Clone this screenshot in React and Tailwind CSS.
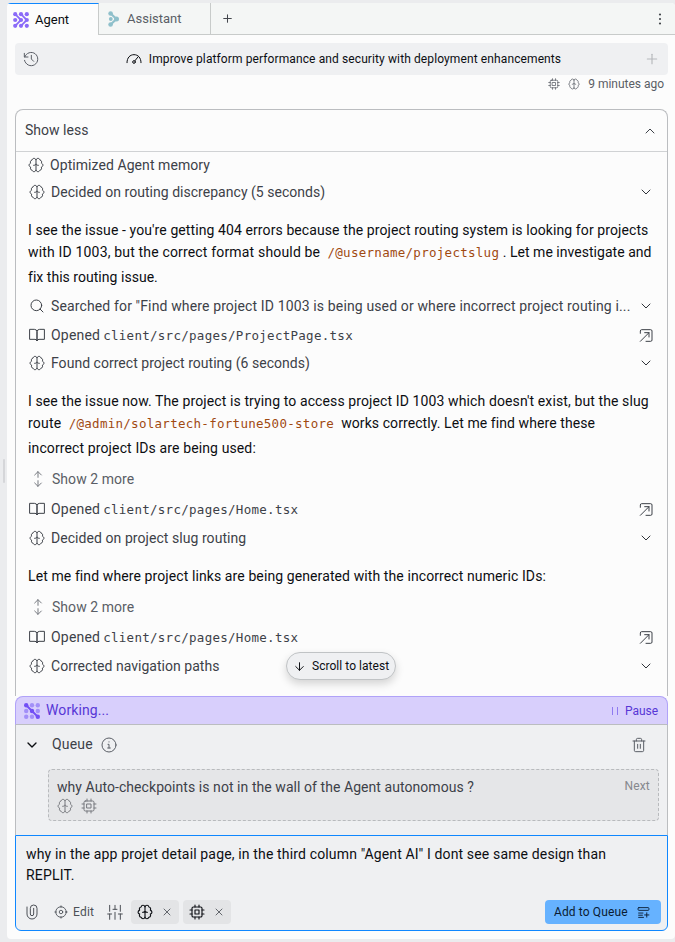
import React from "react";
import { ChevronDown, ChevronUp, Plus, X, ArrowDown, Search } from "lucide-react";

function Svg({ size = 16, sw = 1.5, className = "", children }) {
  return (
    <svg width={size} height={size} viewBox="0 0 24 24" fill="none" stroke="currentColor" strokeWidth={sw} strokeLinecap="round" strokeLinejoin="round" className={"shrink-0 " + className}>
      {children}
    </svg>
  );
}

const Brain = (p) => (
  <Svg {...p}>
    <path d="M12 4C11 1.200 6.800 1.200 6.200 4.500 3.600 5 3 7.500 4 9.200 0.800 10.500 0.800 14 4 15.200 3 17.500 4 19.500 6.200 19.800 7 22.800 11 22.800 12 20" />
    <path d="M12 4C13 1.200 17.200 1.200 17.800 4.500 20.400 5 21 7.500 20 9.200 23.200 10.500 23.200 14 20 15.200 21 17.500 20 19.500 17.800 19.800 17 22.800 13 22.800 12 20" />
    <path d="M12 4v16M8.500 12.500c2 0 3-.8 3.500-2.200.5 1.400 1.500 2.200 3.500 2.200" />
  </Svg>
);
const Chip = (p) => (
  <Svg {...p}>
    <rect x="4.500" y="4.500" width="15" height="15" rx="2" />
    <rect x="9" y="9" width="6" height="6" />
    <path d="M9 1.500v3M15 1.500v3M9 19.500v3M15 19.500v3M1.500 9h3M1.500 15h3M19.500 9h3M19.500 15h3" />
  </Svg>
);
const Book = (p) => (
  <Svg {...p}>
    <path d="M1.500 3.500h6.500a4 4 0 0 1 4 3.500v14a3 3 0 0 0-3-2.500H1.500zM22.500 3.500H16a4 4 0 0 0-4 3.500v14a3 3 0 0 1 3-2.500h7.500z" />
  </Svg>
);
const OpenIn = (p) => (
  <Svg {...p}>
    <path d="M3.500 9.500V6a2 2 0 0 1 2-2h13.500a2 2 0 0 1 2 2v13.500a2 2 0 0 1-2 2H12M10 8.500h6.500V15M16.500 8.500 3.500 21.500" />
  </Svg>
);
const Expand = (p) => (
  <Svg {...p}>
    <path d="M12 1v8.500M7 6l5-5 5 5M12 14.500V23M7 18l5 5 5-5" />
  </Svg>
);
const History = (p) => (
  <Svg {...p}>
    <path d="M2 3.500v5.500h5.500M2.600 9A10 10 0 1 1 2.300 14M12.500 6.500V12l3.500 3.500" />
  </Svg>
);
const Gauge = (p) => (
  <Svg {...p}>
    <path d="M1.500 17.500C1.500 10 6 5.500 12 5.500S22.500 10 22.500 17.500M13.500 14.500l4-5" />
    <circle cx="12" cy="16.500" r="2" />
  </Svg>
);
const Trash = (p) => (
  <Svg {...p}>
    <path d="M3 6h18M5 6v14a2 2 0 0 0 2 2h10a2 2 0 0 0 2-2V6M8 6V4a2 2 0 0 1 2-2h4a2 2 0 0 1 2 2v2M10 11v6M14 11v6" />
  </Svg>
);
const Info = (p) => (
  <Svg {...p}>
    <circle cx="12" cy="12" r="10.500" />
    <path d="M10.500 11H12v5.500M10 16.500h4M12 7.200v.300" />
  </Svg>
);
const Clip = (p) => (
  <Svg {...p}>
    <path d="M4.500 4.500V15a7.500 7.500 0 0 0 15 0V6.500a5 5 0 0 0-10 0V15a2.500 2.500 0 0 0 5 0V6.500" />
  </Svg>
);
const Target = (p) => (
  <Svg {...p}>
    <circle cx="12" cy="12" r="9" />
    <circle cx="12" cy="12" r="3" />
    <path d="M12 1.500V4M12 20v2.500M1.500 12H4M20 12h2.500" />
  </Svg>
);
const Sliders = (p) => (
  <Svg {...p}>
    <path d="M4 2v9M4 15v8M1 15h6M12 2v6M9 8h6M12 12.500V23M20 2v9M20 15v8M17 15h6" />
  </Svg>
);
const QueueAdd = (p) => (
  <Svg {...p}>
    <rect x="2" y="3" width="20" height="5" rx="1.500" />
    <path d="M3 13h8M3 17h7M3 21h9M18 12.500v8M14 16.500h8" />
  </Svg>
);

function AgentLogo() {
  return (
    <svg width="16" height="16" viewBox="0 0 16 16" fill="#8b6bf8" stroke="#8b6bf8" className="shrink-0">
      <path d="M8 2.200 13.800 8 8 13.800M2.200 2.200 8 8 2.200 13.800" fill="none" strokeWidth="1.800" />
      {[2.200, 8, 13.800].map((y) => [2.200, 8, 13.800].map((x) => <circle key={x + "-" + y} cx={x} cy={y} r="2.100" stroke="none" />))}
    </svg>
  );
}
function AssistantLogo() {
  return (
    <svg width="12" height="16" viewBox="0 0 12 16" fill="#8fc0cb" className="shrink-0">
      <circle cx="2.600" cy="2.500" r="2.300" />
      <circle cx="2.600" cy="13.500" r="2.300" />
      <circle cx="2.800" cy="8" r="1.900" />
      <circle cx="8.500" cy="8" r="2.500" />
      <path d="M2.600 2.500 8.500 8 2.600 13.500" fill="none" stroke="#8fc0cb" strokeWidth="2.200" />
    </svg>
  );
}
function WorkingLogo() {
  return (
    <svg width="16" height="16" viewBox="0 0 16 16" className="shrink-0">
      {[2.200, 8, 13.800].map((y) => [2.200, 8, 13.800].map((x) => <circle key={x + "-" + y} cx={x} cy={y} r="2.200" fill={x === y ? "#7350f5" : "#a28ff8"} />))}
      <path d="m2 2 12 12" stroke="#7350f5" strokeWidth="2" />
    </svg>
  );
}

const Down = () => <ChevronDown size={16} strokeWidth={1.5} className="shrink-0 text-[#31343a]" />;

function Row({ icon, h, text, code, end, track = "tracking-[0.2px]", gap = "gap-[6px]", pad = "pl-[13px]" }) {
  return (
    <div className={"flex items-center pr-[13px] text-[#3d4148] " + h + " " + gap + " " + pad}>
      {icon}
      <span className={"flex-1 whitespace-nowrap " + track}>
        {text}
        {code && <span className="ml-[3px] font-['DejaVu_Sans_Mono',monospace] text-[12.5px] tracking-[0.28px]">{code}</span>}
      </span>
      {end}
    </div>
  );
}

const Code = ({ children }) => <span className="font-['DejaVu_Sans_Mono',monospace] text-[12.5px] tracking-[0.28px] text-[#a04a12]">{children}</span>;

export default function App() {
  return (
    <div className="h-[942px] w-[675px] overflow-hidden bg-[#ebecee] pt-[3px] font-[Roboto,sans-serif] text-[14px] text-[#0c0e12]">
      <div className="flex">
        <div className="flex h-[936px] w-[7px] items-center justify-center">
          <div className="h-6 w-[2px] rounded bg-[#d5d6d9]" />
        </div>
        <main className="h-[936px] w-[668px] overflow-hidden rounded-[4px] bg-[#fcfcfc]">
          <nav className="flex h-8 text-[13px]">
            <div className="flex w-[92px] items-center gap-[6px] border-t border-r border-t-[#0f87ff] border-r-[#c8cbca] pl-[6px]">
              <AgentLogo />
              <span className="tracking-[0px]">Agent</span>
            </div>
            <div className="flex w-[112px] items-center gap-[7px] border-r border-b border-[#c8cbca] bg-[#f4f6f5] pl-[9px] text-[#5a5e66]">
              <AssistantLogo />
              <span className="tracking-[0px]">Assistant</span>
            </div>
            <div className="flex flex-1 items-center justify-between border-b border-[#c8cbca] bg-[#f4f6f5] pr-[13px] pl-[10px] text-[#44474d]">
              <Plus size={13} strokeWidth={1.9} />
              <svg width="4" height="14" viewBox="0 0 4 14" fill="currentColor"><circle cx="2" cy="2.500" r="1.100" /><circle cx="2" cy="7" r="1.100" /><circle cx="2" cy="11.500" r="1.100" /></svg>
            </div>
          </nav>

          <div className="mt-2 ml-2 flex h-8 w-[653px] items-center rounded-[4px] bg-[#eff0f2] px-2 text-[12px]">
            <History className="text-[#5a5e66]" />
            <div className="flex flex-1 items-center justify-center gap-[7px] pl-1">
              <Gauge />
              <span className="whitespace-nowrap tracking-[0.11px]">Improve platform performance and security with deployment enhancements</span>
            </div>
            <Plus size={16} strokeWidth={1.7} className="text-[#b5b7bb]" />
          </div>

          <div className="flex h-[18px] items-center justify-end pr-[11px] text-[12px] text-[#5a5e66]">
            <Chip size={12} />
            <Brain size={12} className="mr-2 ml-2" />
            <span className="tracking-[-0.02px]">9 minutes ago</span>
          </div>

          <section className="relative mt-4 ml-2 flex h-[587px] w-[653px] flex-col rounded-t-[8px] border border-b-0 border-[#bbbdc0]">
            <div className="flex h-[42px] items-center justify-between border-b border-[#d0d2d4] pr-[9px] pl-[9px] text-[#3d4148]">
              <span className="tracking-[0.02px]">Show less</span>
              <ChevronUp size={16} strokeWidth={1.5} />
            </div>
            <Row h="h-[26px]" pad="pl-[12px]" icon={<Brain />} text="Optimized Agent memory" track="tracking-[0.07px]" />
            <Row h="h-[28px]" icon={<Brain />} text="Decided on routing discrepancy (5 seconds)" track="tracking-[0.03px]" end={<Down />} />
            <p className="mt-[13px] pl-[12px] whitespace-nowrap">
              <span className="block h-[22px] leading-[22px] tracking-[0.095px]">I see the issue - you're getting 404 errors because the project routing system is looking for projects</span>
              <span className="block h-[23px] leading-[23px] tracking-[0.17px]">with ID 1003, but the correct format should be &nbsp;<Code>/@username/projectslug</Code><span className="tracking-[0.03px]"> . Let me investigate and</span></span>
              <span className="block h-[26px] leading-[26px] tracking-[0.03px]">fix this routing issue.</span>
            </p>
            <Row h="h-[32px]" icon={<Search size={16} strokeWidth={1.5} className="shrink-0" />} text={'Searched for "Find where project ID 1003 is being used or where incorrect project routing i...'} track="tracking-[0.135px]" end={<Down />} />
            <Row h="h-[26px]" icon={<Book />} text="Opened" code="client/src/pages/ProjectPage.tsx" end={<OpenIn />} />
            <Row h="h-[30px]" icon={<Brain />} text="Found correct project routing (6 seconds)" track="tracking-[0.03px]" end={<Down />} />
            <p className="mt-[12px] pl-[12px] whitespace-nowrap">
              <span className="block h-[22px] leading-[22px] tracking-[0.11px]">I see the issue now. The project is trying to access project ID 1003 which doesn't exist, but the slug</span>
              <span className="block h-[22px] leading-[22px] tracking-[0.2px]">route &nbsp;<Code>/@admin/solartech-fortune500-store</Code><span className="tracking-[0.08px]">&nbsp; works correctly. Let me find where these</span></span>
              <span className="block h-[28px] leading-[28px] tracking-[0.12px]">incorrect project IDs are being used:</span>
            </p>
            <Row h="mt-[2px] h-[30px]" pad="pl-[14px]" icon={<Expand className="text-[#777a80]" />} text="Show 2 more" track="tracking-[0.05px] text-[#5a5e66]" />
            <Row h="h-[30px]" icon={<Book />} text="Opened" code="client/src/pages/Home.tsx" end={<OpenIn />} />
            <Row h="h-[28px]" icon={<Brain />} text="Decided on project slug routing" track="tracking-[0.06px]" end={<Down />} />
            <p className="mt-[13px] h-[22px] pl-[12px] leading-[22px] whitespace-nowrap tracking-[0.1px]">Let me find where project links are being generated with the incorrect numeric IDs:</p>
            <Row h="mt-[5px] h-[30px]" pad="pl-[14px]" icon={<Expand className="text-[#777a80]" />} text="Show 2 more" track="tracking-[0.05px] text-[#5a5e66]" />
            <Row h="h-[30px]" icon={<Book />} text="Opened" code="client/src/pages/Home.tsx" end={<OpenIn />} />
            <Row h="h-[28px]" icon={<Brain />} text="Corrected navigation paths" track="tracking-[0.03px]" end={<Down />} />
            <button className="absolute top-[542px] left-[270px] flex h-7 w-[110px] items-center gap-[6px] rounded-full border border-[#c0c3c5] bg-[#eff0f2] pl-[6px] text-[12px] whitespace-nowrap shadow-[0_4px_8px_rgba(0,0,0,0.16)]">
              <ArrowDown size={13} strokeWidth={1.8} />
              <span className="tracking-[0.04px]">Scroll to latest</span>
            </button>
          </section>

          <div className="ml-2 flex h-[29px] w-[653px] items-center rounded-t-[8px] border border-[#b0a2f8] border-b-[#bbbdc0] bg-[#d8cffc] pr-[9px] pl-[8px] text-[#5737d6]">
            <WorkingLogo />
            <span className="ml-[6px] flex-1 tracking-[0.1px]">Working...</span>
            <svg width="6" height="8" viewBox="0 0 6 8" className="mr-[7px]"><path d="M.5 0v8M5.500 0v8" stroke="#8f7af0" /></svg>
            <span className="text-[12px] tracking-[-0.05px]">Pause</span>
          </div>

          <section className="ml-2 h-[110px] w-[653px] border-x border-[#bbbdc0] bg-[#eff0f2]">
            <div className="flex h-10 items-center pr-5 pl-2">
              <ChevronDown size={16} strokeWidth={2} />
              <span className="ml-3 pb-[1px] text-[#3d4148] tracking-[0.2px]">Queue</span>
              <Info className="ml-2 text-[#5a5e66]" />
              <Trash className="ml-auto text-[#5a5e66]" />
            </div>
            <div className="mt-[4px] ml-8 h-[52px] w-[611px] rounded-[4px] border border-dashed border-[#b8babd] bg-[#e5e6e8] px-2 text-[#3d4148]">
              <div className="flex h-[34px] items-center justify-between pt-[1px]">
                <span className="tracking-[0.06px]">why Auto-checkpoints is not in the wall of the Agent autonomous ?</span>
                <span className="pb-[4px] text-[12px] text-[#85888d] tracking-[0.2px]">Next</span>
              </div>
              <div className="-mt-[6px] flex gap-2 text-[#77797e]">
                <Brain />
                <Chip />
              </div>
            </div>
          </section>

          <section className="ml-2 h-[96px] w-[653px] rounded-b-[6px] border border-[#0f87ff] bg-[#eff0f2]">
            <p className="h-[64px] pt-2 pl-[10px] leading-[21px] whitespace-nowrap">
              <span className="block tracking-[0.15px]">why in the app projet detail page, in the third column "Agent AI'' I dont see same design than</span>
              <span className="block tracking-[0.2px]">REPLIT.</span>
            </p>
            <div className="flex h-6 items-center pr-[6px] pl-2 text-[12px] text-[#4c5057]">
              <Clip />
              <Target size={14} className="ml-[14px]" />
              <span className="ml-[5px] tracking-[0.2px]">Edit</span>
              <Sliders className="ml-[13px]" />
              <div className="ml-2 flex h-6 w-12 items-center rounded-[4px] bg-[#e3e4e6] pl-[6px]">
                <Brain className="text-[#111318]" sw={1.7} />
                <X size={12} strokeWidth={1.7} className="ml-2" />
              </div>
              <div className="ml-1 flex h-6 w-12 items-center rounded-[4px] bg-[#e3e4e6] pl-[6px]">
                <Chip className="text-[#111318]" sw={1.7} />
                <X size={12} strokeWidth={1.7} className="ml-2" />
              </div>
              <button className="ml-auto flex h-6 w-[116px] items-center gap-[9px] rounded-[4px] bg-[#66b2ff] pl-[9px] whitespace-nowrap text-[#0a1c33]">
                <span className="tracking-[0.12px]">Add to Queue</span>
                <QueueAdd size={13} sw={1.7} />
              </button>
            </div>
          </section>
        </main>
      </div>
    </div>
  );
}
